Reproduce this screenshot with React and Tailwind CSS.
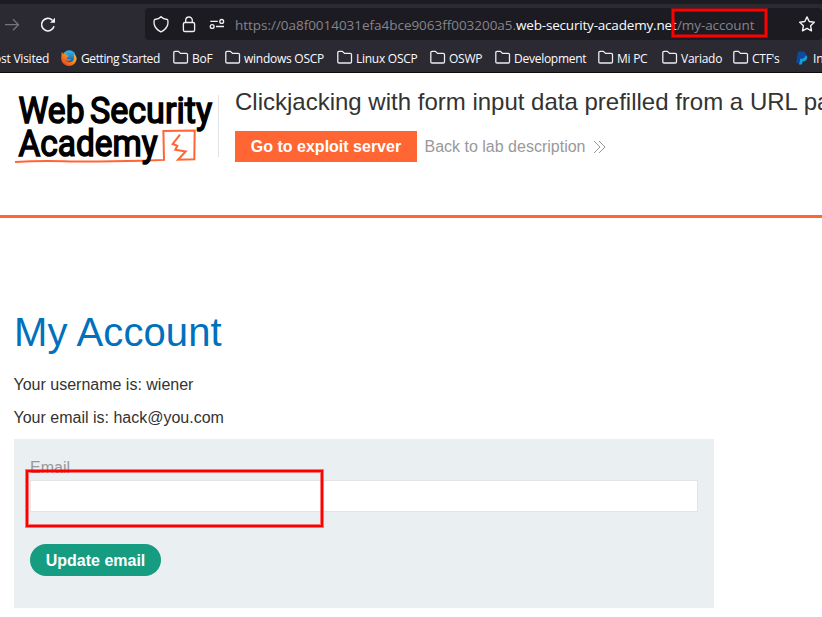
import React from "react";

const bookmarks = [
  { label: "BoF", width: "w-[52px]" },
  { label: "windows OSCP", width: "w-[112px]" },
  { label: "Linux OSCP", width: "w-[93px]" },
  { label: "OSWP", width: "w-[65px]" },
  { label: "Development", width: "w-[103px]" },
  { label: "Mi PC", width: "w-[64px]" },
  { label: "Variado", width: "w-[71px]" },
  { label: "CTF's", width: "w-[63px]" },
];

function Folder() {
  return (
    <svg width="16" height="16" viewBox="0 0 16 16" fill="none" stroke="#ececee" strokeWidth="1.3" className="-mt-[2px] shrink-0">
      <path d="M.8 11.800V2.700Q.8 1.400 2.100 1.400h3.300l2.100 2h5.800q1.200 0 1.200 1.200v7.200q0 1.200-1.200 1.200H2.100Q.8 13 .8 11.800Z" />
    </svg>
  );
}

function Firefox() {
  return (
    <svg width="16" height="16" viewBox="0 0 16 16" className="-mt-[2px] shrink-0">
      <defs>
        <linearGradient id="flame" x1="1" y1="0" x2="0" y2="1">
          <stop offset="0" stopColor="#ffd83c" />
          <stop offset=".45" stopColor="#ff8a16" />
          <stop offset="1" stopColor="#df3522" />
        </linearGradient>
        <linearGradient id="globe" x1="0" y1="0" x2="0" y2="1">
          <stop offset="0" stopColor="#35b8ec" />
          <stop offset="1" stopColor="#174e9c" />
        </linearGradient>
      </defs>
      <circle cx="8.2" cy="7" r="6.8" fill="url(#globe)" />
      <path d="M.6 2.1 2.5 4c1-.8 2-.9 3.2-.7C4.800 4.200 5 5 6 5.300l1.700.4C7.400 6.700 6.100 7 5.500 7.800c.3 2.200 3.300 2.100 4.600 1.100-1.200 3-5.300 2.100-6.100-.4.4 3.700 6.200 5.300 8.600 1.500 1-1.700.6-4.200-.3-6.200C14.800 5.300 15.800 7.700 15.600 9 15 13.200 12 15.900 8 15.900 3.500 15.900 0 12.300.2 8 .2 5.600.8 4.200.6 2.100Z" fill="url(#flame)" />
    </svg>
  );
}

function PayPal() {
  return (
    <svg width="12" height="14" viewBox="0 0 12 14" className="-mt-[2px] shrink-0">
      <path d="M4 4h5.200c2 .5 2.400 2 1.800 3.700-.6 2-2 2.700-4.300 2.700l-.8 3.200H3Z" fill="#169bd7" />
      <path d="M2 .5h4.600c2.700 0 3.700 1.500 3 3.900C9 6.900 7.200 7.700 4.200 7.700L3.400 12H.2Z" fill="#0b4a9c" />
    </svg>
  );
}

function Toolbar() {
  return (
    <div className="flex h-10 items-end">
      <div className="flex h-8 w-[145px] shrink-0 items-center">
        <svg width="70" height="32" viewBox="0 0 70 32" fill="none">
          <path d="M5 16.700h13.500M13 11.200l5.500 5.500-5.500 5.500" stroke="#75747b" strokeWidth="1.300" />
          <path d="M54 18.200a6.300 6.300 0 1 1-1.700-6.100" stroke="#f4f4f6" strokeWidth="1.600" />
          <path d="M55 9.800v5h-5Z" fill="#f4f4f6" />
        </svg>
      </div>
      <div className="flex h-8 w-[677px] shrink-0 items-center rounded-[4px] bg-[#1c1b22] text-[13.5px] text-[#85848b]">
        <svg width="90" height="32" viewBox="0 0 90 32" fill="none" stroke="#eeeef0" strokeWidth="1.350" className="shrink-0">
          <path d="M16 8.800c1.600 1.800 4 2.500 6.300 2.700.8.100.8 3.200.4 5-.7 3.500-3.100 5.600-6.700 7.400-3.600-1.800-6-3.900-6.700-7.400-.4-1.800-.4-4.900.4-5 2.300-.2 4.700-.9 6.300-2.700Z" />
          <rect x="38.400" y="14.500" width="11.200" height="9" rx="1.600" />
          <path d="M40.700 14.500v-2.200a3.300 3.300 0 0 1 6.600 0v2.200" />
          <path d="M65.300 13.400h7.500M71 18.500h8" />
          <circle cx="76.700" cy="13.400" r="1.900" />
          <circle cx="67.200" cy="18.500" r="1.900" />
        </svg>
        <div className="flex w-[560px] whitespace-pre pt-[2px] leading-[18px]">
          <span className="w-[281px] tracking-[-0.03px]">https://0a8f0014031efa4bce9063ff003200a5.</span>
          <span className="w-[161px] tracking-[-0.19px] text-[#fbfbfe]">web-security-academy.net</span>
          <span className="tracking-[-0.1px]">/my-account</span>
        </div>
        <svg width="20" height="20" viewBox="0 0 20 20" fill="none" stroke="#f1f1f3" strokeWidth="1.400" strokeLinejoin="round" className="ml-[2px] shrink-0">
          <path d="m10 2.900 2.200 4.600 5.100.7-3.700 3.500.9 5.100-4.500-2.500-4.500 2.500.9-5.100-3.700-3.500 5.100-.7Z" />
        </svg>
      </div>
    </div>
  );
}

function Bookmarks() {
  return (
    <div className="flex h-8 items-center whitespace-nowrap pt-[6px] text-[12px] leading-4 text-[#fbfbfe]">
      <div className="flex w-[61px] shrink-0 justify-end pr-3 tracking-[-0.25px]">Most Visited</div>
      <div className="flex w-28 shrink-0 items-center gap-1">
        <Firefox />
        <span className="tracking-[-0.4px]">Getting Started</span>
      </div>
      {bookmarks.map((b) => (
        <div key={b.label} className={"flex shrink-0 items-center gap-[3px] tracking-[-0.26px] " + b.width}>
          <Folder />
          <span>{b.label}</span>
        </div>
      ))}
      <div className="flex shrink-0 items-center gap-[5px]">
        <PayPal />
        <span>Iniciar</span>
      </div>
    </div>
  );
}

function Logo() {
  return (
    <svg width="219" height="92" viewBox="0 0 219 92" className="shrink-0">
      <g fill="none" stroke="#ff6633" strokeWidth="2">
        <path d="M15 89q25-1.500 50-.700t78-.500l21-.900-.600-28.900 31.300-.400-.400 28.600-16.300.5 7.700-8.300-10.400-1.700 2-4-4.600-1.700 7.300-9.300" />
      </g>
      <g fill="#000" stroke="#000" strokeWidth="1.500" fontFamily="Roboto, sans-serif" fontWeight="400" fontSize="36">
        <text x="18.500" y="50" textLength="66" lengthAdjust="spacingAndGlyphs">Web</text>
        <text x="90" y="50" textLength="122" lengthAdjust="spacingAndGlyphs">Security</text>
        <text x="18.500" y="82.500" textLength="139" lengthAdjust="spacingAndGlyphs">Academy</text>
      </g>
      <path d="M218.500 22v62" stroke="#e3e3e3" />
    </svg>
  );
}

export default function App() {
  return (
    <div className="relative h-[617px] w-[822px] overflow-hidden bg-white font-['Liberation_Sans',Arial,sans-serif] text-[#333332]">
      <div className="h-[73px] border-t-4 border-b border-t-[#1c1b22] border-b-[#0c0c0d] bg-[#2b2a33] font-['Open_Sans','Noto_Sans',sans-serif]">
        <div className="-mt-1">
          <Toolbar />
          <Bookmarks />
        </div>
      </div>

      <header className="flex h-[145px] border-b-[3px] border-[#ff6633]">
        <Logo />
        <div className="flex flex-col pl-4 pt-[15px]">
          <h2 className="h-[43px] whitespace-nowrap text-[24px] leading-[27px]">Clickjacking with form input data prefilled from a URL parameter</h2>
          <div className="flex h-[31px] items-center whitespace-nowrap text-[16px]">
            <span className="flex h-full w-[182px] items-center justify-center bg-[#ff6633] font-bold text-white">Go to exploit server</span>
            <span className="ml-[7.500px] text-[#999999]">Back to lab description</span>
            <svg width="14" height="14" viewBox="0 0 14 14" fill="none" stroke="#999" strokeWidth="1" className="ml-2">
              <path d="m1 1 6 6-6 6M6 1l6 6-6 6" />
            </svg>
          </div>
        </div>
      </header>

      <main className="pl-[14px] pt-[91px]">
        <h1 className="h-[67px] text-[40px] leading-[46px] tracking-[0.1px] text-[#0071bc]">My Account</h1>
        <p className="-ml-[0.5px] h-[33px] text-[16px] leading-[18px]">Your username is: wiener</p>
        <p className="-ml-[0.5px] h-[30px] text-[16px] leading-[18px]">Your email is: hack@you.com</p>
        <form className="flex h-[169px] w-[700px] flex-col bg-[#eaeff2] px-4 pt-5">
          <label className="h-[21px] text-[16px] leading-[18px] text-[#999999]">Email</label>
          <input className="h-8 w-full border border-[#e4e4e4] bg-white" />
          <button type="button" className="mt-8 h-8 w-[131px] rounded-full bg-[#169c80] pt-px text-[16px] font-bold text-white">Update email</button>
        </form>
      </main>

      <div className="absolute left-[672px] top-[9px] h-7 w-[95px] border-2 border-[#ff0000] shadow-[0_0_0_1px_#ff000080,inset_0_0_0_1px_#ff000080]" />
      <div className="absolute left-[26px] top-[470px] h-[57px] w-[297px] border-2 border-[#ff0000] shadow-[0_0_0_1px_#ff000080,inset_0_0_0_1px_#ff000080]" />
    </div>
  );
}
